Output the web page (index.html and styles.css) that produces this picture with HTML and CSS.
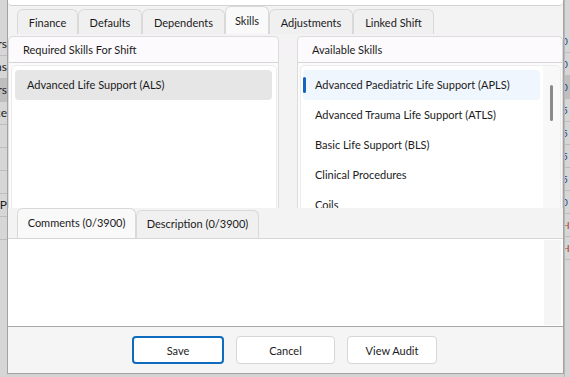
FILE: index.html
```html
<!DOCTYPE html>
<html lang="en">
<head>
    <meta charset="UTF-8">
    <title>Shift Skills</title>
    <link rel="stylesheet" href="styles.css">
</head>
<body>

    <div class="backdrop backdrop-left">
        <div class="row">Headers</div>
        <div class="row">Surgeons</div>
        <div class="row active">Workers</div>
        <div class="row">Practice</div>
        <div class="row"></div>
        <div class="row"></div>
        <div class="row"></div>
        <div class="row">GP</div>
        <div class="row"></div>
    </div>

    <div class="dialog">
        <div class="top-panel"></div>

        <div class="tabs">
            <div class="tab">Finance</div>
            <div class="tab">Defaults</div>
            <div class="tab">Dependents</div>
            <div class="tab selected">Skills</div>
            <div class="tab">Adjustments</div>
            <div class="tab">Linked Shift</div>
        </div>

        <div class="skills">
            <div class="skill-panel required">
                <div class="skill-header">Required Skills For Shift</div>
                <div class="skill-list">
                    <div class="skill-item picked">Advanced Life Support (ALS)</div>
                </div>
            </div>
            <div class="skill-panel available">
                <div class="skill-header">Available Skills</div>
                <div class="skill-list">
                    <div class="skill-items">
                        <div class="skill-item focused">Advanced Paediatric Life Support (APLS)</div>
                        <div class="skill-item">Advanced Trauma Life Support (ATLS)</div>
                        <div class="skill-item">Basic Life Support (BLS)</div>
                        <div class="skill-item">Clinical Procedures</div>
                        <div class="skill-item">Coils</div>
                    </div>
                    <div class="scroll-track"><div class="scroll-thumb"></div></div>
                </div>
            </div>
        </div>

        <div class="note-tabs">
            <div class="note-tab selected">Comments (0/3900)</div>
            <div class="note-tab">Description (0/3900)</div>
        </div>
        <div class="note-box">
            <div class="note-text"></div>
            <div class="note-scroll"></div>
        </div>

        <div class="footer">
            <button class="btn primary">Save</button>
            <button class="btn cancel">Cancel</button>
            <button class="btn audit">View Audit</button>
        </div>
    </div>

    <div class="backdrop backdrop-right">
        <div class="row">0</div>
        <div class="row">0</div>
        <div class="row active">0</div>
        <div class="row">5</div>
        <div class="row">5</div>
        <div class="row">5</div>
        <div class="row">5</div>
        <div class="row">0</div>
        <div class="row mark">H</div>
        <div class="row mark">H</div>
    </div>

</body>
</html>
```

FILE: styles.css
```css
* {
    box-sizing: border-box;
}
body {
    font-family: 'Lato', 'Noto Sans', sans-serif;
    font-size: 11px;
    color: #1b1b1b;
    margin: 0;
    padding: 0;
    width: 570px;
    height: 377px;
    overflow: hidden;
    display: flex;
    background-color: #d3d3d3;
}
.backdrop {
    width: 7px;
    overflow: hidden;
    background-color: #d6d6d6;
    padding-top: 33px;
}
.backdrop .row {
    height: 23px;
    line-height: 22px;
    border-bottom: 1px solid #bdbdbd;
    white-space: nowrap;
    font-size: 12px;
    color: #222;
}
.backdrop-left .row {
    direction: rtl;
    text-align: right;
}
.backdrop .row.active {
    background-color: #bfbfbf;
}
.backdrop-right {
    width: 6px;
    padding-top: 30px;
    border-left: 1px solid #b8b8b8;
}
.backdrop-right .row {
    font-size: 10px;
    color: #2a3f8a;
    text-indent: -3px;
}
.backdrop-right .row.mark {
    color: #b0402a;
}

.dialog {
    width: 557px;
    height: 374px;
    border: 1px solid #a3a3a3;
    border-top: none;
    background-color: #f3f3f3;
    display: flex;
    flex-direction: column;
}
.top-panel {
    height: 6px;
    flex-shrink: 0;
    background-color: #fff;
    border-bottom: 1px solid #d2d2d2;
    border-radius: 0 0 4px 4px;
}

/* tab strip */
.tabs {
    display: flex;
    align-items: flex-end;
    height: 28px;
    flex-shrink: 0;
    padding-left: 9px;
    margin-bottom: 2px;
}
.tab {
    height: 25px;
    line-height: 25px;
    background-color: #f0f0f0;
    border: 1px solid #d9d9d9;
    border-bottom: none;
    border-radius: 6px 6px 0 0;
    text-align: center;
    white-space: nowrap;
}
.tab:nth-child(1) { width: 61px; }
.tab:nth-child(2) { width: 64px; }
.tab:nth-child(3) { width: 83px; }
.tab:nth-child(4) { width: 44px; }
.tab:nth-child(5) { width: 84px; }
.tab:nth-child(6) { width: 81px; }
.tab.selected {
    height: 28px;
    line-height: 27px;
    background-color: #f9f9f9;
}

/* skills lists */
.skills {
    display: flex;
    gap: 18px;
    height: 172px;
    flex-shrink: 0;
}
.skill-panel {
    display: flex;
    flex-direction: column;
    border: 1px solid #dcdcdc;
    border-bottom: none;
    border-radius: 5px 5px 0 0;
    background-color: #fcfafc;
}
.required {
    width: 271px;
}
.available {
    width: 266px;
}
.skill-header {
    height: 26px;
    line-height: 25px;
    padding-left: 14px;
    border-bottom: 1px solid #d6d6d6;
}
.skill-list {
    flex: 1;
    display: flex;
    margin: 2px 1px 0 2px;
    background-color: #fff;
    border: 1px solid #ececec;
    border-bottom: none;
    border-radius: 5px 5px 0 0;
    overflow: hidden;
}
.required .skill-list {
    flex-direction: column;
    padding: 4px 4px 0 3px;
}
.skill-items {
    flex: 1;
    padding: 4px 3px 0 2px;
}
.skill-item {
    height: 30px;
    line-height: 30px;
    padding-left: 12px;
    border-radius: 4px;
    white-space: nowrap;
}
.skill-item.picked {
    background-color: #e6e6e6;
}
.skill-item.focused {
    position: relative;
    background-color: #f0f6fd;
}
.skill-item.focused::before {
    content: "";
    position: absolute;
    left: 0;
    top: 7px;
    width: 3px;
    height: 16px;
    border-radius: 2px;
    background-color: #1565c0;
}
.scroll-track {
    width: 17px;
    background-color: #f8f8f8;
    padding-top: 19px;
    display: flex;
    justify-content: center;
}
.scroll-thumb {
    width: 3px;
    height: 36px;
    border-radius: 2px;
    background-color: #8a8a8a;
}

/* comments / description */
.note-tabs {
    display: flex;
    align-items: flex-end;
    height: 31px;
    flex-shrink: 0;
    padding-left: 9px;
    border-bottom: 1px solid #d6d6d6;
}
.note-tab {
    height: 28px;
    line-height: 26px;
    text-align: center;
    white-space: nowrap;
    background-color: #f0f0f0;
    border: 1px solid #d9d9d9;
    border-bottom: none;
    border-radius: 6px 6px 0 0;
}
.note-tab:nth-child(1) { width: 119px; }
.note-tab:nth-child(2) { width: 123px; }
.note-tab.selected {
    height: 30px;
    line-height: 27px;
    background-color: #f9f9f9;
}
.note-box {
    height: 88px;
    flex-shrink: 0;
    display: flex;
    background-color: #fff;
    border-bottom: 1px solid #a8a8a8;
}
.note-text {
    flex: 1;
}
.note-scroll {
    width: 17px;
    margin: 1px 2px 1px 0;
    background-color: #f5f5f5;
}

/* buttons */
.footer {
    flex: 1;
    display: flex;
    justify-content: center;
    align-items: flex-start;
    gap: 12px;
    padding-top: 9px;
    padding-right: 2px;
    background-color: #f5f5f5;
}
.btn {
    height: 28px;
    font-family: inherit;
    font-size: 11px;
    color: #1b1b1b;
    background-color: #fff;
    border: 1px solid #d6d6d6;
    border-radius: 4px;
}
.btn.primary {
    width: 92px;
    border: 2px solid #0f6cbd;
}
.btn.cancel {
    width: 99px;
}
.btn.audit {
    width: 90px;
}
```
